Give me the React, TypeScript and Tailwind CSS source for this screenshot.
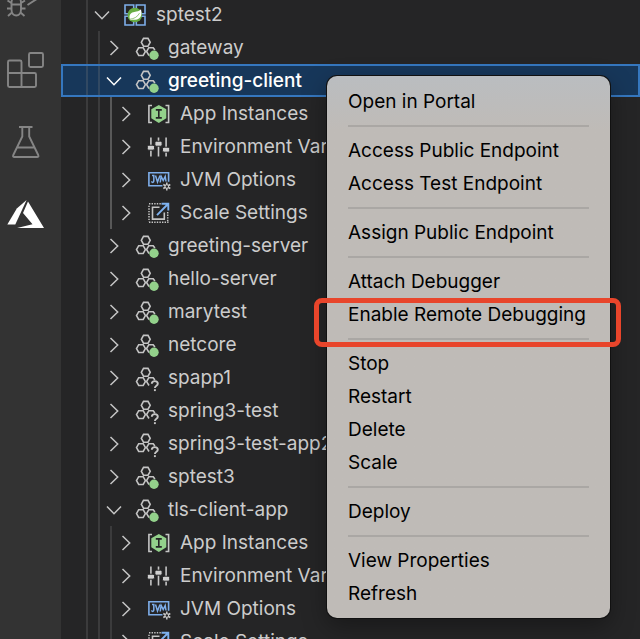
import type { ReactNode } from "react";

type IconKind = "spring" | "running" | "unknown" | "instances" | "variables" | "jvm" | "scale";

interface TreeItem {
  label: string;
  level: 0 | 1 | 2;
  icon: IconKind;
  open?: boolean;
  selected?: boolean;
  activeGuide?: boolean;
}

const settings = (activeGuide: boolean): TreeItem[] => [
  { label: "App Instances", level: 2, icon: "instances", activeGuide },
  { label: "Environment Variables", level: 2, icon: "variables", activeGuide },
  { label: "JVM Options", level: 2, icon: "jvm", activeGuide },
  { label: "Scale Settings", level: 2, icon: "scale", activeGuide },
];

const tree: TreeItem[] = [
  { label: "sptest2", level: 0, icon: "spring", open: true },
  { label: "gateway", level: 1, icon: "running" },
  { label: "greeting-client", level: 1, icon: "running", open: true, selected: true },
  ...settings(true),
  { label: "greeting-server", level: 1, icon: "running" },
  { label: "hello-server", level: 1, icon: "running" },
  { label: "marytest", level: 1, icon: "running" },
  { label: "netcore", level: 1, icon: "running" },
  { label: "spapp1", level: 1, icon: "unknown" },
  { label: "spring3-test", level: 1, icon: "unknown" },
  { label: "spring3-test-app2", level: 1, icon: "unknown" },
  { label: "sptest3", level: 1, icon: "running" },
  { label: "tls-client-app", level: 1, icon: "running", open: true },
  ...settings(false),
];

const menuGroups: string[][] = [
  ["Open in Portal"],
  ["Access Public Endpoint", "Access Test Endpoint"],
  ["Assign Public Endpoint"],
  ["Attach Debugger", "Enable Remote Debugging"],
  ["Stop", "Restart", "Delete", "Scale"],
  ["Deploy"],
  ["View Properties", "Refresh"],
];

const highlighted = "Enable Remote Debugging";

function Chevron({ open, bright }: { open?: boolean; bright?: boolean }) {
  return (
    <svg
      viewBox="0 0 20 20"
      className={`size-5 shrink-0 ${bright ? "text-white" : "text-[#c5c5c5]"}`}
      fill="none"
      stroke="currentColor"
      strokeWidth="1.5"
      aria-hidden="true"
    >
      <path d={open ? "M3 6.5 10 13.7 17 6.5" : "M6.5 3 13.7 10 6.5 17"} />
    </svg>
  );
}

function Hexagons({ children }: { children: ReactNode }) {
  return (
    <>
      <g fill="none" stroke="#c4c4c4" strokeWidth="1.6">
        <path d="M5.3 5.3 7.5 1.4H12L14.2 5.3 12 9.2H7.5Z" />
        <path d="M.5 14.6 2.7 10.7H7.2L9.4 14.6 7.2 18.5H2.7Z" />
        <path d="M13 18.5 10.6 14.6 12.8 10.7H17.2L18.9 13" />
      </g>
      {children}
    </>
  );
}

function ItemIcon({ kind }: { kind: IconKind }) {
  let content: ReactNode;
  if (kind === "spring") {
    content = (
      <>
        <g fill="none" stroke="#7eaeea" strokeWidth="1.6">
          <path d="M1 1h8.7v8.7H1zM12.3 1H21v8.7h-8.7zM1 12.3h8.7V21H1zM12.3 12.3H21V21h-8.7z" />
        </g>
        <circle cx="10.8" cy="11" r="7.3" fill="#68ad43" />
        <path d="M17 5.2c1 4.2.5 7.5-2 9.3-2.5 1.7-5.5 1-8.5 1.4-.7-.8-1.3-2.6-.8-4.3.9-3.3 3.8-3.5 6.7-4.1C14.5 7.1 16 6.5 17 5.2Z" fill="#fff" />
        <path d="M6 15.2c4-.4 7.5-2.3 9.5-6" fill="none" stroke="#68ad43" strokeWidth="0.7" />
      </>
    );
  } else if (kind === "running") {
    content = (
      <Hexagons>
        <circle cx="18" cy="18.2" r="4.7" fill="#93d18b" />
      </Hexagons>
    );
  } else if (kind === "unknown") {
    content = (
      <Hexagons>
        <g fill="none" stroke="#c5c5c5" strokeWidth="1.9">
          <path d="M15.8 16.7c0-3.4 6-3.4 6 0 0 2-2.9 2-2.9 4.3" />
          <path d="M18.9 22.2v1.9" />
        </g>
      </Hexagons>
    );
  } else if (kind === "instances") {
    content = (
      <>
        <path d="M4 2.5H.9v17H4M17.5 2.5h3.1v17h-3.1" fill="none" stroke="#c5c5c5" strokeWidth="1.6" />
        <path d="M10.8 1.9 18.3 6.3v9l-7.5 4.6-7.5-4.6v-9Z" fill="#93d18b" />
        <path d="M7.8 6.9h6M10.8 6.9v8M7.8 14.9h6" stroke="#252526" strokeWidth="1.6" />
      </>
    );
  } else if (kind === "variables") {
    content = (
      <>
        <path d="M2.9 1.5V20.5M10.5 1.5V20.5M18.1 1.5V20.5" stroke="#c5c5c5" strokeWidth="1.6" />
        <g stroke="#252526" strokeWidth="1" fill="#d0d0d0">
          <rect x="-.7" y="9.2" width="7.2" height="5" rx="1.5" />
          <rect x="6.9" y="5.2" width="7.2" height="5" rx="1.5" />
          <rect x="14.5" y="11.2" width="7.2" height="5" rx="1.5" />
        </g>
      </>
    );
  } else if (kind === "jvm") {
    content = (
      <>
        <path d="M14.5 16.8H.9V3.8h19.7v9" fill="none" stroke="#7eaeea" strokeWidth="1.6" />
        <path d="M3.3 12.5q2 2 2.5-.5V6.500H4M7.5 6.5l2 6.500 2.500-6.500M12.2 13.5l1-6 2 4 2-4 .8 5" fill="none" stroke="#7eaeea" strokeWidth="1.5" />
        <g stroke="#c8c8c8" strokeWidth="1.5">
          <path d="M18.8 13.5v8M15.3 15.5l7 4M22.3 15.5l-7 4" />
        </g>
        <circle cx="18.8" cy="17.5" r="1.8" fill="#252526" stroke="#c8c8c8" strokeWidth="1.1" />
      </>
    );
  } else {
    content = (
      <>
        <path d="M1 1.8H13M1 20.2H20.5" stroke="#c5c5c5" strokeWidth="1.5" strokeDasharray="1.4 1.2" />
        <path d="M1 3.7V19.5M19.7 10V19.5" stroke="#c5c5c5" strokeWidth="1.5" strokeDasharray="1.4 1.2" />
        <path d="M11.5 5.3H4.5v11.8H16.3V10.5" fill="none" stroke="#c5c5c5" strokeWidth="1.6" />
        <path d="M9 13.2 20 2M13.5 1.8H20.3V8.5" fill="none" stroke="#7eb2f0" strokeWidth="1.9" />
      </>
    );
  }
  return (
    <svg viewBox="0 0 22 22" className="size-[22px] shrink-0 overflow-visible" aria-hidden="true">
      {content}
    </svg>
  );
}

function TreeRow({ item }: { item: TreeItem }) {
  const guides = Array.from({ length: item.level }, (_, i) => i);
  return (
    <li role="treeitem" aria-expanded={!!item.open} aria-selected={!!item.selected} aria-level={item.level + 1}>
      <button
        type="button"
        className={`flex h-[33px] w-full items-center pl-[25px] text-left whitespace-nowrap ${
          item.selected
            ? "bg-[#17375a] font-medium text-white outline-2 -outline-offset-2 outline-[#3577bf]"
            : "text-[#cccccc]"
        }`}
      >
        {guides.map((g) => (
          <span key={g} className="w-3 shrink-0 self-stretch border-l-2 border-[#7f7f7f]/25" />
        ))}
        <span
          className={`w-[6px] shrink-0 self-stretch border-l-2 ${
            item.activeGuide ? "border-[#585858]" : "border-[#7f7f7f]/25"
          }`}
        />
        <Chevron open={item.open} bright={item.selected} />
        <span className="ml-3 flex items-center gap-[10px] pt-px">
          <ItemIcon kind={item.icon} />
          {item.label}
        </span>
      </button>
    </li>
  );
}

function ActivityButton({ label, active, children }: { label: string; active?: boolean; children: ReactNode }) {
  return (
    <button
      type="button"
      aria-label={label}
      className={`flex h-[72px] w-[52px] items-center justify-center ${active ? "text-white" : "text-[#858585]"}`}
    >
      <svg viewBox="0 0 40 40" className="size-10" fill="none" stroke="currentColor" strokeWidth="1.9" aria-hidden="true">
        {children}
      </svg>
    </button>
  );
}

function ActivityBar() {
  return (
    <nav aria-label="Activity bar" className="-mt-[38px] w-[61px] shrink-0 bg-[#333333]">
      <ActivityButton label="Run and Debug">
        <path d="M14 3 37 17 21.5 27" />
        <path d="M5.5 24.5c0-7 9.5-7 9.5 0v7c0 8-9.5 8-9.5 0ZM5.5 26.5h9.5" />
        <path d="M1.5 22.5 5.5 25M19 22.5 15 25M1 30.5h4.5M15 30.5h4.5M2 38l4-3.5M18.5 38l-4-3.5" />
      </ActivityButton>
      <ActivityButton label="Extensions">
        <rect x="23" y="3" width="14" height="14" rx="1.5" />
        <path d="M3.5 10.5H14q1.5 0 1.5 1.5V23H28.5q1.5 0 1.5 1.5V35.5q0 1.5-1.5 1.5H3.5Q2 37 2 35.5V12q0-1.5 1.5-1.5ZM2 23H15.5V37" />
      </ActivityButton>
      <ActivityButton label="Testing">
        <path d="M13 5H26.5M16.3 5V14.5L7.3 33Q6.5 35 8 35H31.5Q33 35 32.2 33L23.2 14.5V5M11.5 25.5H28" />
      </ActivityButton>
      <ActivityButton label="Azure" active>
        <g fill="currentColor" stroke="none">
          <path d="M20.6 6 10.8 14.5 1.3 30.5H9.3Z" />
          <path d="M22 7.5 38 34H11L26.5 30.3 17 19Z" />
        </g>
      </ActivityButton>
    </nav>
  );
}

function ContextMenu() {
  return (
    <div
      role="menu"
      className="absolute top-[76px] left-[327px] w-[283px] rounded-[10px] bg-[#bfbbb7] bg-linear-to-b from-[#babdc0] to-[#bfbbb7] to-10% px-[21px] pt-[9px] pb-2 text-black shadow-[0_0_0_1px_#111111,0_8px_24px_rgba(0,0,0,0.35)]"
    >
      {menuGroups.map((group, index) => (
        <div key={group[0]} role="group">
          {index > 0 && (
            <div role="separator" className="flex h-4 items-center">
              <span className="h-[2px] w-full bg-[#aaa7a4]" />
            </div>
          )}
          {group.map((label) => (
            <div key={label} className="relative">
              <button type="button" role="menuitem" className="block h-[33px] w-full pt-px text-left whitespace-nowrap">
                {label}
              </button>
              {label === highlighted && (
                <span className="pointer-events-none absolute top-0 -right-8 -left-[34px] h-[49px] rounded-lg border-[5px] border-[#e8452b]" />
              )}
            </div>
          ))}
        </div>
      ))}
    </div>
  );
}

export default function App() {
  return (
    <div className="relative flex h-screen overflow-hidden bg-[#252526] font-['Inter','Liberation_Sans',sans-serif] text-[19px] leading-6">
      <ActivityBar />
      <ul role="tree" aria-label="Azure resources" className="-mt-0.5 min-w-0 flex-1">
        {tree.map((item, index) => (
          <TreeRow key={index} item={item} />
        ))}
      </ul>
      <ContextMenu />
    </div>
  );
}
